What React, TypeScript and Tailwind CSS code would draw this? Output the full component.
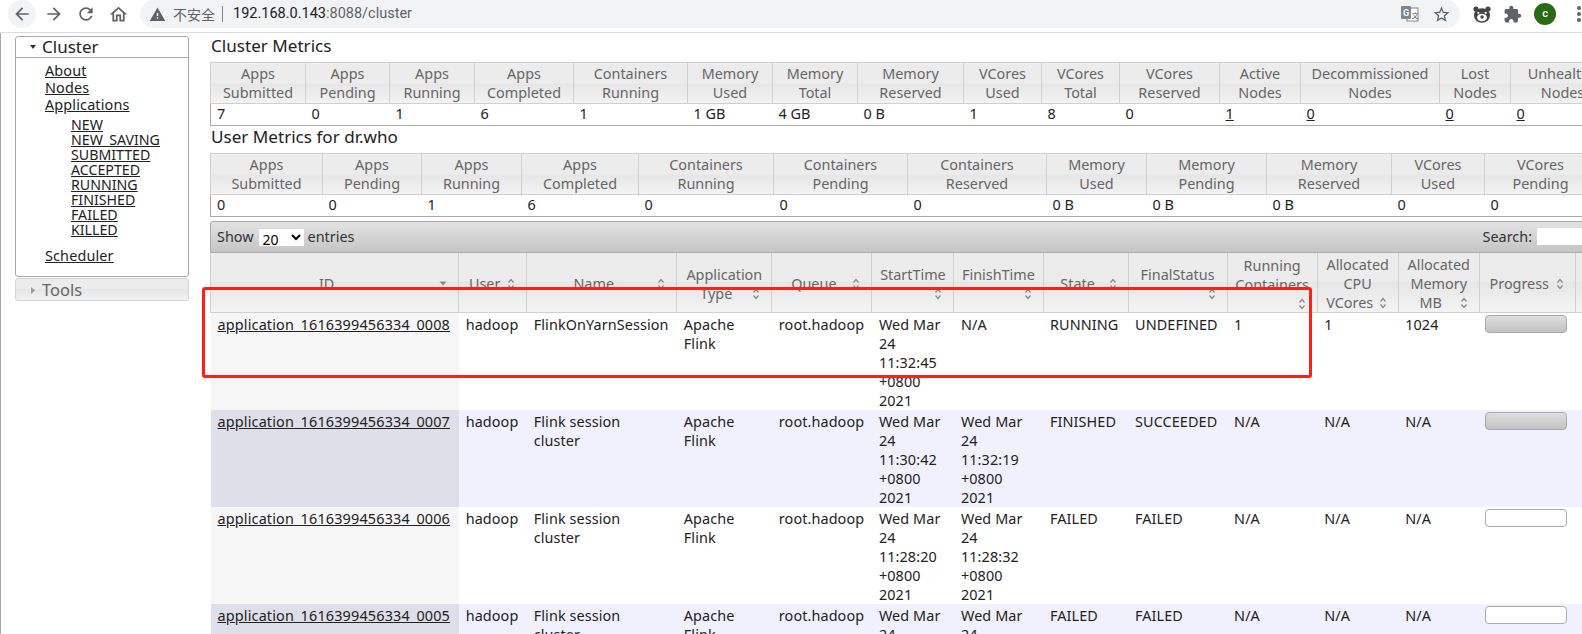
import React from "react";

const F = "font-['Noto_Sans','Open_Sans',sans-serif]";

const cluster = [
  ["w-[95px]", "Apps", "Submitted", "7"],
  ["w-[84px]", "Apps", "Pending", "0"],
  ["w-[85px]", "Apps", "Running", "1"],
  ["w-[99px]", "Apps", "Completed", "6"],
  ["w-[114px]", "Containers", "Running", "1"],
  ["w-[85px]", "Memory", "Used", "1 GB"],
  ["w-[85px]", "Memory", "Total", "4 GB"],
  ["w-[106px]", "Memory", "Reserved", "0 B"],
  ["w-[78px]", "VCores", "Used", "1"],
  ["w-[78px]", "VCores", "Total", "8"],
  ["w-[100px]", "VCores", "Reserved", "0"],
  ["w-[81px]", "Active", "Nodes", "L1"],
  ["w-[139px]", "Decommissioned", "Nodes", "L0"],
  ["w-[71px]", "Lost", "Nodes", "L0"],
  ["w-[104px]", "Unhealthy", "Nodes", "L0"],
];

const user = [
  ["w-[112px]", "Apps", "Submitted", "0"],
  ["w-[99px]", "Apps", "Pending", "0"],
  ["w-[100px]", "Apps", "Running", "1"],
  ["w-[117px]", "Apps", "Completed", "6"],
  ["w-[135px]", "Containers", "Running", "0"],
  ["w-[134px]", "Containers", "Pending", "0"],
  ["w-[139px]", "Containers", "Reserved", "0"],
  ["w-[100px]", "Memory", "Used", "0 B"],
  ["w-[120px]", "Memory", "Pending", "0 B"],
  ["w-[125px]", "Memory", "Reserved", "0 B"],
  ["w-[93px]", "VCores", "Used", "0"],
  ["w-[112px]", "VCores", "Pending", "0"],
];

const HEAD = "bg-[linear-gradient(#ececec_0%,#ececec_49%,#e6e6e6_50%,#f3f3f3_100%)]";

function MetricTable({ cols, w }: { cols: string[][]; w: string }) {
  return (
    <table className={`table-fixed border-collapse ${w}`}>
      <thead>
        <tr className="h-[41px]">
          {cols.map((c, i) => (
            <th key={i} className={`${c[0]} ${HEAD} border border-[#d0d0d0] border-t-[#cfcfcf] px-0 py-0 font-normal text-center text-[#666] leading-[19px]`}>
              {c[1]}
              <br />
              {c[2]}
            </th>
          ))}
        </tr>
      </thead>
      <tbody>
        <tr className="h-[22px]">
          {cols.map((c, i) => (
            <td key={i} className={`pl-[6px] pt-0 pb-[2px] text-left text-[#222] leading-[19px] border-b border-b-[#aaa] ${i === 0 ? "border-l border-l-[#aaa]" : ""}`}>
              {c[3].startsWith("L") ? <a className="underline">{c[3].slice(1)}</a> : c[3]}
            </td>
          ))}
        </tr>
      </tbody>
    </table>
  );
}

function Sort({ kind = "both" }: { kind?: string }) {
  return (
    <span className="float-right block w-4 h-4 mt-[2px]">
      {kind === "desc" ? (
        <svg width="16" height="16" viewBox="0 0 16 16">
          <path d="M4.5 5.5h7L8 9.5z" fill="#888" />
        </svg>
      ) : (
        <svg width="16" height="16" viewBox="0 0 16 16" fill="none" stroke="#888" strokeWidth="1.2">
          <path d="M5.5 6.5 8 3.5l2.5 3" />
          <path d="M5.5 9.5 8 12.5l2.5-3" />
        </svg>
      )}
    </span>
  );
}

const heads: [string, React.ReactNode, string?][] = [
  ["w-[248px]", "ID", "desc"],
  ["w-[68px]", "User"],
  ["w-[150px]", "Name"],
  ["w-[95px]", <>Application<br />Type</>],
  ["w-[100px]", "Queue"],
  ["w-[82px]", "StartTime"],
  ["w-[89px]", "FinishTime"],
  ["w-[85px]", "State"],
  ["w-[99px]", "FinalStatus"],
  ["w-[90px]", <>Running<br />Containers</>],
  ["w-[81px]", <>Allocated<br />CPU<br />VCores</>],
  ["w-[81px]", <>Allocated<br />Memory<br />MB</>],
  ["w-[96px]", "Progress"],
  ["w-[100px]", "Tracking UI"],
];

const rows = [
  ["application_1616399456334_0008", "hadoop", "FlinkOnYarnSession", "Wed Mar 24 11:32:45 +0800 2021", "N/A", "RUNNING", "UNDEFINED", "1", "1", "1024", "full", "ApplicationMaster", "bg-white", "bg-[#f6f6f6]"],
  ["application_1616399456334_0007", "hadoop", "Flink session cluster", "Wed Mar 24 11:30:42 +0800 2021", "Wed Mar 24 11:32:19 +0800 2021", "FINISHED", "SUCCEEDED", "N/A", "N/A", "N/A", "full", "History", "bg-[#f1f1fd]", "bg-[#dfdfe9]"],
  ["application_1616399456334_0006", "hadoop", "Flink session cluster", "Wed Mar 24 11:28:20 +0800 2021", "Wed Mar 24 11:28:32 +0800 2021", "FAILED", "FAILED", "N/A", "N/A", "N/A", "empty", "History", "bg-white", "bg-[#f6f6f6]"],
  ["application_1616399456334_0005", "hadoop", "Flink session cluster", "Wed Mar 24 11:27:04 +0800 2021", "Wed Mar 24 11:27:16 +0800 2021", "FAILED", "FAILED", "N/A", "N/A", "N/A", "empty", "History", "bg-[#f1f1fd]", "bg-[#dfdfe9]"],
];

const TD = "pl-[7px] pr-[8px] pt-[2px] pb-0 align-top text-left leading-[19px] text-[#222] tracking-[0.1px]";

function P({ d, s = 20, c = "#5f6368" }: { d: string; s?: number; c?: string }) {
  return (
    <svg width={s} height={s} viewBox="0 0 24 24" fill={c} className="shrink-0">
      <path d={d} />
    </svg>
  );
}

function Toolbar() {
  return (
    <div className={`h-[33px] border-b border-b-[#dadce0] bg-white flex items-start overflow-hidden font-['Roboto',sans-serif]`}>
      <div className="w-[140px] h-[28px] flex items-center pl-[8px] shrink-0">
        <div className="w-[28px] h-[28px] rounded-full bg-[#f1f3f4] flex items-center justify-center">
          <P d="M20 11H7.83l5.59-5.59L12 4l-8 8 8 8 1.41-1.41L7.83 13H20v-2z" />
        </div>
        <div className="w-[32px] ml-[2px] flex justify-center">
          <P d="M12 4l-1.41 1.41L16.17 11H4v2h12.17l-5.58 5.59L12 20l8-8z" />
        </div>
        <div className="w-[32px] flex justify-center">
          <P d="M17.65 6.35C16.2 4.9 14.21 4 12 4c-4.42 0-7.99 3.58-7.99 8s3.57 8 7.99 8c3.73 0 6.84-2.55 7.73-6h-2.08c-.82 2.33-3.04 4-5.65 4-3.31 0-6-2.69-6-6s2.69-6 6-6c1.66 0 3.14.69 4.22 1.78L13 11h7V4l-2.35 2.35z" />
        </div>
        <div className="w-[32px] flex justify-center">
          <P s={21} d="M12 5.69l5 4.5V18h-2v-6H9v6H7v-7.81l5-4.5M12 3L2 12h3v8h6v-6h2v6h6v-8h3L12 3z" />
        </div>
      </div>
      <div className="w-[1320px] h-[28px] bg-[#f1f3f4] rounded-r-[14px] rounded-l-[14px] flex items-center pl-[9px] shrink-0">
        <P s={17} d="M1 21h22L12 2 1 21zm12-3h-2v-2h2v2zm0-4h-2v-4h2v4z" />
        <span className="ml-[7px] text-[14px] text-[#5f6368] font-['Noto_Sans_CJK_SC',sans-serif]">不安全</span>
        <span className="ml-[7px] w-px h-[16px] bg-[#80868b]" />
        <span className="ml-[10px] text-[14.5px] text-[#202124]">192.168.0.143<span className="text-[#5f6368]">:8088/cluster</span></span>
        <span className="ml-auto mr-[9px] flex items-center gap-[13px]">
          <svg width="19" height="18" viewBox="0 0 19 18">
            <rect x="7" y="3" width="11" height="13" fill="#fff" stroke="#80868b" />
            <rect x="1" y="1" width="10" height="13" rx="1" fill="#80868b" />
            <text x="3" y="11" fontSize="9" fontWeight="700" fill="#fff" fontFamily="Roboto">G</text>
            <text x="11.5" y="13" fontSize="7" fill="#5f6368" fontFamily="Noto Sans CJK SC">文</text>
          </svg>
          <P s={19} d="M22 9.24l-7.19-.62L12 2 9.19 8.63 2 9.24l5.46 4.73L5.82 21 12 17.27 18.18 21l-1.63-7.03L22 9.24zM12 15.4l-3.76 2.27 1-4.28-3.32-2.88 4.38-.38L12 6.1l1.71 4.04 4.38.38-3.32 2.88 1 4.28L12 15.4z" />
        </span>
      </div>
      <div className="flex-1 h-[28px] flex items-center pl-[13px]">
        <svg width="18" height="17" viewBox="0 0 18 17" className="shrink-0">
          <circle cx="3" cy="3" r="2.6" fill="#444" />
          <circle cx="15" cy="3" r="2.6" fill="#444" />
          <ellipse cx="9" cy="9.5" rx="8" ry="7.3" fill="#444" />
          <ellipse cx="9" cy="11.5" rx="5" ry="3.8" fill="#fff" />
          <circle cx="5.3" cy="6.8" r="1.1" fill="#fff" />
          <circle cx="12.7" cy="6.8" r="1.1" fill="#fff" />
          <circle cx="9" cy="11" r="1.7" fill="#444" />
        </svg>
        <span className="ml-[12px]">
          <P s={19} d="M20.5 11H19V7c0-1.1-.9-2-2-2h-4V3.5C13 2.12 11.88 1 10.5 1S8 2.12 8 3.5V5H4c-1.1 0-1.99.9-1.99 2v3.8H3.5c1.49 0 2.7 1.21 2.7 2.7s-1.21 2.7-2.7 2.7H2V20c0 1.1.9 2 2 2h3.8v-1.5c0-1.49 1.21-2.7 2.7-2.7 1.49 0 2.7 1.21 2.7 2.7V22H17c1.1 0 2-.9 2-2v-4h1.5c1.38 0 2.5-1.12 2.5-2.5S21.88 11 20.5 11z" />
        </span>
        <span className="ml-[12px] w-[22px] h-[22px] rounded-full bg-[#2a6a17] text-white text-[11px] font-medium flex items-center justify-center shrink-0">c</span>
        <span className="ml-[21px] flex flex-col gap-[2px] shrink-0">
          <i className="block w-[4px] h-[4px] rounded-full bg-[#5f6368]" />
          <i className="block w-[4px] h-[4px] rounded-full bg-[#5f6368]" />
          <i className="block w-[4px] h-[4px] rounded-full bg-[#5f6368]" />
        </span>
      </div>
    </div>
  );
}

function Sidebar() {
  const subs = ["NEW", "NEW_SAVING", "SUBMITTED", "ACCEPTED", "RUNNING", "FINISHED", "FAILED", "KILLED"];
  return (
    <aside className="w-[174px] ml-[14px] mt-[3px] shrink-0">
      <div className="border border-[#aaa] rounded-[3px] h-[241px] bg-white">
        <div className="h-[21px] border-b border-b-[#aaa] flex items-center pl-[13px] text-[17px] text-[#222]">
          <svg width="8" height="6" viewBox="0 0 8 6" className="mr-[5px]"><path d="M1 1h6L4 5z" fill="#333" /></svg>
          Cluster
        </div>
        <ul className="pl-[29px] pt-[4px] text-[14.4px] leading-[17px] text-[#222] tracking-[0.15px]">
          <li><a className="underline">About</a></li>
          <li><a className="underline">Nodes</a></li>
          <li><a className="underline">Applications</a></li>
          <ul className="pl-[26px] pt-[4px] text-[14.2px] leading-[15px] tracking-normal">
            {subs.map((s) => <li key={s}><a className="underline">{s}</a></li>)}
          </ul>
          <li className="pt-[10px]"><a className="underline">Scheduler</a></li>
        </ul>
      </div>
      <div className={`mt-[1px] h-[23px] pt-[1px] border border-[#d3d3d3] rounded-[3px] ${HEAD} flex items-center pl-[14px] text-[16.5px] text-[#666]`}>
        <svg width="6" height="9" viewBox="0 0 6 9" className="mr-[6px]"><path d="M1 1v7l4-3.5z" fill="#999" /></svg>
        Tools
      </div>
    </aside>
  );
}

export default function App() {
  return (
    <div className={`relative w-[1582px] h-[634px] overflow-hidden bg-white text-[14.4px] ${F}`}>
      <Toolbar />
      <div className="flex h-[601px] border-l border-l-[#aaa]">
        <Sidebar />
        <main className="ml-[21px] min-w-0 flex-1 overflow-hidden">
          <h3 className="h-[29px] pl-[1px] pt-[2px] text-[17.1px] leading-[22px] text-[#222] font-normal">Cluster Metrics</h3>
          <MetricTable cols={cluster} w="w-[1404px]" />
          <h3 className="h-[27px] pl-[1px] text-[17.1px] leading-[22px] text-[#222] font-normal">User Metrics for dr.who</h3>
          <MetricTable cols={user} w="w-[1386px]" />
          <div className="mt-[4px] h-[32px] w-[1400px] border border-[#aaa] rounded-t-[3px] bg-[linear-gradient(#e3e3e3,#c5c5c5)] flex items-center pl-[6px] text-[#333]">
            <span>Show</span>
            <select className="ml-[5px] w-[45px] h-[17px] bg-white text-[14px] text-black border-0 outline-none" defaultValue="20">
              <option>20</option>
            </select>
            <span className="ml-[4px]">entries</span>
            <label className="ml-auto flex items-center">
              <span>Search:</span>
              <input className="ml-[5px] w-[72px] h-[17px] bg-white border-0 outline-none" />
            </label>
          </div>
          <table className="table-fixed border-collapse w-[1466px]">
            <thead>
              <tr className="h-[59px]">
                {heads.map((h, i) => (
                  <th key={i} className={`${h[0]} ${HEAD} border border-[#d0d0d0] border-t-0 px-[7px] pt-[2px] pb-0 align-middle text-center font-normal leading-[19px] text-[#666]`}>
                    <div>
                      {h[1]}
                      <Sort kind={h[2]} />
                    </div>
                  </th>
                ))}
              </tr>
            </thead>
            <tbody>
              {rows.map((r) => (
                <tr key={r[0]} className={`h-[97px] ${r[12]}`}>
                  <td className={`${TD} ${r[13]}`}><a className="underline tracking-[0.17px]">{r[0]}</a></td>
                  <td className={TD}>{r[1]}</td>
                  <td className={TD}>{r[2]}</td>
                  <td className={TD}>Apache Flink</td>
                  <td className={TD}>root.hadoop</td>
                  <td className={TD}>{r[3]}</td>
                  <td className={TD}>{r[4]}</td>
                  <td className={TD}>{r[5]}</td>
                  <td className={TD}>{r[6]}</td>
                  <td className={TD}>{r[7]}</td>
                  <td className={TD}>{r[8]}</td>
                  <td className={TD}>{r[9]}</td>
                  <td className="pl-[6px] pr-[7px] pt-[2px] align-top">
                    <div className={`w-[82px] h-[18px] border border-[#aaa] rounded-[4px] ${r[10] === "full" ? "bg-[linear-gradient(#dedede,#c2c2c2)]" : "bg-white"}`} />
                  </td>
                  <td className={TD}><a className="underline">{r[11]}</a></td>
                </tr>
              ))}
            </tbody>
          </table>
        </main>
      </div>
      <div className="absolute left-[202px] top-[287px] w-[1110px] h-[91px] border-[3px] border-[#ff1f14] rounded-[3px] pointer-events-none" />
    </div>
  );
}
